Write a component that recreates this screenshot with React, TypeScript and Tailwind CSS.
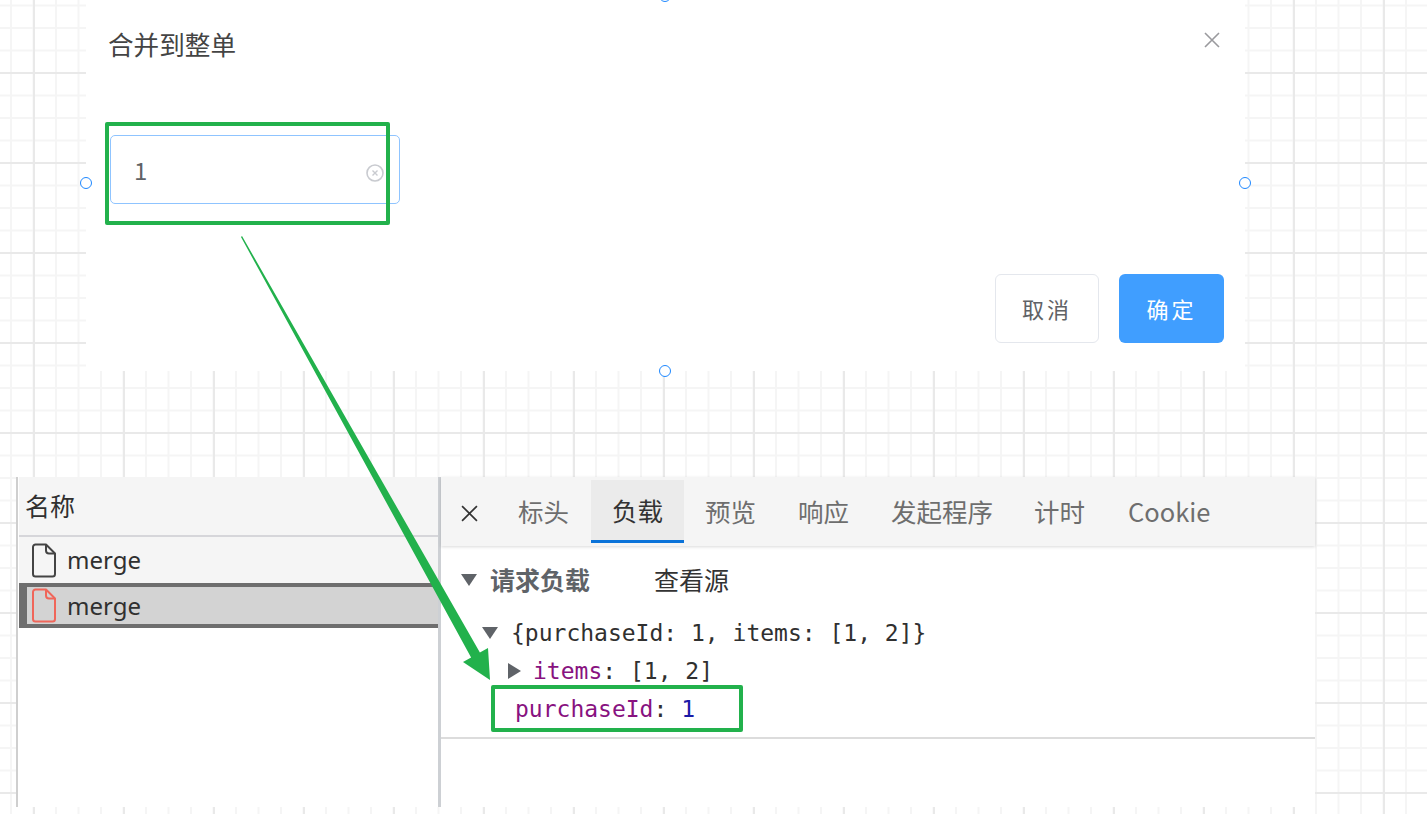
const cjk = "font-['Noto_Sans_CJK_SC','Noto_Sans',sans-serif]";
const mono = "font-['DejaVu_Sans_Mono','Liberation_Mono',monospace]";

const tabs = [
  { label: "标头", className: "ml-[40px]" },
  { label: "负载", className: "", active: true },
  { label: "预览", className: "ml-[21px]" },
  { label: "响应", className: "ml-[42px]" },
  { label: "发起程序", className: "ml-[42px]" },
  { label: "计时", className: "ml-[41px]" },
  { label: "Cookie", className: "ml-[43px]" },
];

function Handle({ className }: { className: string }) {
  return (
    <div className={`absolute h-[12px] w-[12px] rounded-full border border-[#1e88ff] bg-white ${className}`} />
  );
}

function CloseIcon({ className }: { className: string }) {
  return (
    <svg viewBox="0 0 16 16" className={className} fill="none" stroke="currentColor" strokeWidth="1.6">
      <path d="M1 1 15 15M15 1 1 15" />
    </svg>
  );
}

function FileIcon({ color }: { color: string }) {
  return (
    <svg width="26" height="35" viewBox="0 0 26 35" fill="none" stroke={color} strokeWidth="2" strokeLinejoin="round">
      <path d="M15 1.5H4.5a2.5 2.5 0 0 0-2.5 2.5v27a2.5 2.5 0 0 0 2.5 2.5h17a2.5 2.5 0 0 0 2.5-2.5V10.5z" />
      <path d="M15 1.5v6a3 3 0 0 0 3 3h6" />
    </svg>
  );
}

function Dialog() {
  return (
    <div className="ml-[86px] flex h-[371px] w-[1159px] flex-col bg-white">
      <div className="flex items-start justify-between pl-[22px] pr-[25px] pt-[25px]">
        <h2 className="text-[25.6px] leading-[38px] text-[#444]">合并到整单</h2>
        <CloseIcon className="mt-[7px] h-[16px] w-[16px] text-[#9a9a9e]" />
      </div>
      <div className="ml-[24px] mt-[72px] flex h-[69px] w-[290px] items-center justify-between rounded-[5px] border border-[#8fc4ff] pl-[23px] pr-[15px]">
        <span className="text-[24px] text-[#606266]">1</span>
        <svg width="18" height="18" viewBox="0 0 18 18" fill="none" stroke="#c9cbd0" className="mt-[6px]">
          <circle cx="9" cy="9" r="8" strokeWidth="1.6" />
          <path d="M6.5 6.5 11.5 11.5M11.5 6.5 6.5 11.5" strokeWidth="1.4" />
        </svg>
      </div>
      <div className="mr-[21px] mt-[70px] flex justify-end gap-[20px]">
        <button className="h-[69px] w-[104px] rounded-[6px] border border-[#e4e7ed] bg-white text-[22px] tracking-[3px] text-[#606266]">
          取消
        </button>
        <button className="h-[69px] w-[105px] rounded-[6px] bg-[#409eff] text-[22px] tracking-[3px] text-white">
          确定
        </button>
      </div>
    </div>
  );
}

function RequestList() {
  return (
    <div className="h-full w-[422px] shrink-0 border-l-2 border-[#cfcfcf] bg-white pl-[1px] text-[#303030]">
      <div className="flex h-[60px] items-center border-b-2 border-[#d6d6da] bg-[#f5f5f5] pl-[6px] text-[25px]">名称</div>
      <div className="flex h-[46px] items-center gap-[10px] bg-[#f5f5f5] pl-[12px] font-['Noto_Sans',sans-serif] text-[24px]">
        <FileIcon color="#444" />
        <span>merge</span>
      </div>
      <div className="flex h-[45px] items-center gap-[10px] border-y-[4px] border-l-[8px] border-[#6e6e6e] bg-[#d3d3d3] pl-[4px] font-['Noto_Sans',sans-serif] text-[24px]">
        <FileIcon color="#f0665a" />
        <span>merge</span>
      </div>
    </div>
  );
}

function PayloadPane() {
  return (
    <div className="flex h-full flex-1 flex-col border-l-[3px] border-[#cdd0d4] bg-white">
      <div className="flex h-[69px] items-start bg-[#f5f5f5] shadow-[0_1px_3px_rgba(0,0,0,0.15)]">
        <CloseIcon className="ml-[20px] mt-[28px] h-[17px] w-[17px] text-[#333]" />
        {tabs.map((tab) => (
          <div
            key={tab.label}
            className={
              tab.active
                ? "ml-[22px] mt-[3px] flex h-[63px] w-[93px] items-center justify-center border-b-[3px] border-[#0b73d9] bg-[#ebebeb] text-[25.5px] text-[#333]"
                : `mt-[3px] flex h-[63px] items-center text-[25.5px] text-[#6e6e6e] ${tab.className}`
            }
          >
            {tab.label}
          </div>
        ))}
      </div>

      <div className="flex h-[68px] items-center pl-[20px]">
        <span className="h-0 w-0 border-x-[8px] border-t-[12px] border-x-transparent border-t-[#5f6368]" />
        <span className="ml-[13px] text-[25px] font-bold text-[#5f6368]">请求负载</span>
        <span className="ml-[64px] text-[25px] text-[#333]">查看源</span>
      </div>

      <div className={`${mono} text-[23px] leading-[38px] text-[#303030]`}>
        <div className="flex items-center pl-[41px]">
          <span className="h-0 w-0 border-x-[8.5px] border-t-[12px] border-x-transparent border-t-[#5f6368]" />
          <span className="ml-[13px] whitespace-pre">{"{purchaseId: 1, items: [1, 2]}"}</span>
        </div>
        <div className="flex items-center pl-[67px]">
          <span className="h-0 w-0 border-y-[8.5px] border-l-[13px] border-y-transparent border-l-[#5f6368]" />
          <span className="ml-[12px] whitespace-pre">
            <span className="text-[#881280]">items</span>: [1, 2]
          </span>
        </div>
        <div className="whitespace-pre pl-[74px]">
          <span className="text-[#881280]">purchaseId</span>: <span className="text-[#1a1aa6]">1</span>
        </div>
      </div>
      <div className="mt-[9px] h-[2px] bg-[#dcdcdc]" />
    </div>
  );
}

export default function App() {
  return (
    <div
      className={`${cjk} relative h-[814px] w-full overflow-hidden bg-white bg-[linear-gradient(to_right,#e9e9e9_2px,transparent_2px),linear-gradient(to_bottom,#e9e9e9_2px,transparent_2px),linear-gradient(to_right,#f5f5f5_2px,transparent_2px),linear-gradient(to_bottom,#f5f5f5_2px,transparent_2px)] bg-[size:90px_90px,90px_90px,22.5px_22.5px,22.5px_22.5px] bg-[position:33px_0,0_72px,10px_0,0_4.5px]`}
    >
      <Dialog />
      <div className="ml-[16px] mt-[106px] flex h-[330px] w-[1299px]">
        <RequestList />
        <PayloadPane />
      </div>

      {/* annotations drawn on top of the screenshots */}
      <Handle className="left-[80px] top-[177px]" />
      <Handle className="left-[1239px] top-[177px]" />
      <Handle className="left-[659px] top-[365px]" />
      <Handle className="left-[659px] top-[-10px]" />

      <div className="absolute left-[105px] top-[122px] h-[103px] w-[285px] rounded-[2px] border-[4px] border-[#22b14c]" />
      <div className="absolute left-[491px] top-[685px] h-[47px] w-[252px] rounded-[2px] border-[4px] border-[#22b14c]" />
      <svg className="absolute left-0 top-0" width="1427" height="814" fill="#22b14c">
        <polygon points="242,236 479.9,652.6 488,648 490,680 463,662 471.1,657.4 241,237" />
      </svg>
    </div>
  );
}
